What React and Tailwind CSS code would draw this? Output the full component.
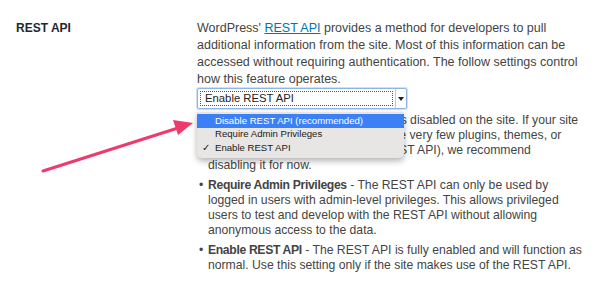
import React from 'react';

const font = { fontFamily: '"Liberation Sans", Arial, sans-serif' };

const options = [
  { label: 'Disable REST API (recommended)', active: true },
  { label: 'Require Admin Privileges' },
  { label: 'Enable REST API', checked: true },
];

// annotation arrow drawn over the page
const Arrow = () => (
  <svg className="absolute left-0 top-0 pointer-events-none" width="610" height="284" viewBox="0 0 610 284">
    <line x1="43" y1="171" x2="178" y2="128" stroke="#ef3a6c" strokeWidth="3" strokeLinecap="round" />
    <polygon points="193,123 173,120 178,135" fill="#ef3a6c" />
  </svg>
);

const SelectBox = () => (
  <div className="relative w-[210px] h-[21px]">
    <div className="w-full h-full bg-white border border-[#8fb4ec] rounded-[2px] shadow-[0_0_0_1px_rgba(120,165,235,0.35)] flex items-stretch">
      <div className="flex-1 m-[2px] border border-dotted border-[#555] flex items-center pl-[4px] text-[11.3px] text-[#222]">
        Enable REST API
      </div>
      <div className="w-[11px] border-l border-[#c8c8c8] flex items-center justify-center">
        <span className="block w-0 h-0 border-l-[3px] border-r-[3px] border-t-[4px] border-l-transparent border-r-transparent border-t-[#222]" />
      </div>
    </div>
    <div className="absolute left-0 top-[24px] w-[207px] bg-[#e8e6e5] rounded-b-[5px] shadow-[0_3px_6px_rgba(0,0,0,0.3)] pt-[2px] pb-[3px] z-10">
      {options.map((o) => (
        <div
          key={o.label}
          className={`relative h-[13.5px] flex items-center pl-[18px] text-[9.6px] leading-none ${o.active ? 'bg-[#3b80f5] text-white' : 'text-[#1a1a1a]'}`}
        >
          {o.checked && <span className="absolute left-[5px] text-[10px]">✓</span>}
          {o.label}
        </div>
      ))}
    </div>
  </div>
);

export default function App() {
  return (
    <div className="relative w-[610px] h-[284px] bg-white overflow-hidden text-[#444]" style={font}>
      <div className="flex pt-[20px] pl-[16px]">
        <div className="w-[181px] text-[12px] leading-[17px] font-bold text-[#23282d]">REST API</div>
        <div className="w-[400px]">
          <p className="text-[12.5px] leading-[17px] whitespace-nowrap">
            WordPress' <a className="text-[#0073aa] underline">REST API</a> provides a method for developers to pull<br />
            additional information from the site. Most of this information can be<br />
            accessed without requiring authentication. The follow settings control<br />
            how this feature operates.
          </p>
          <SelectBox />
          <ul className="mt-[4px] text-[12.2px] leading-[15px] whitespace-nowrap">
            <li className="flex mb-[5px]">
              <span className="w-[11px] pl-[2px]">•</span>
              <span>
                <b className="tracking-[-0.35px]">Disable REST API</b> - The REST API is disabled on the site. If your site<br />
                has no real use for it, and you'll have very few plugins, themes, or<br />
                services (which rely on the core REST API), we recommend<br />
                disabling it for now.
              </span>
            </li>
            <li className="flex mb-[5px]">
              <span className="w-[11px] pl-[2px]">•</span>
              <span>
                <b className="tracking-[-0.35px]">Require Admin Privileges</b> - The REST API can only be used by<br />
                logged in users with admin-level privileges. This allows privileged<br />
                users to test and develop with the REST API without allowing<br />
                anonymous access to the data.
              </span>
            </li>
            <li className="flex">
              <span className="w-[11px] pl-[2px]">•</span>
              <span>
                <b className="tracking-[-0.35px]">Enable REST API</b> - The REST API is fully enabled and will function as<br />
                normal. Use this setting only if the site makes use of the REST API.
              </span>
            </li>
          </ul>
        </div>
      </div>
      <Arrow />
    </div>
  );
}
